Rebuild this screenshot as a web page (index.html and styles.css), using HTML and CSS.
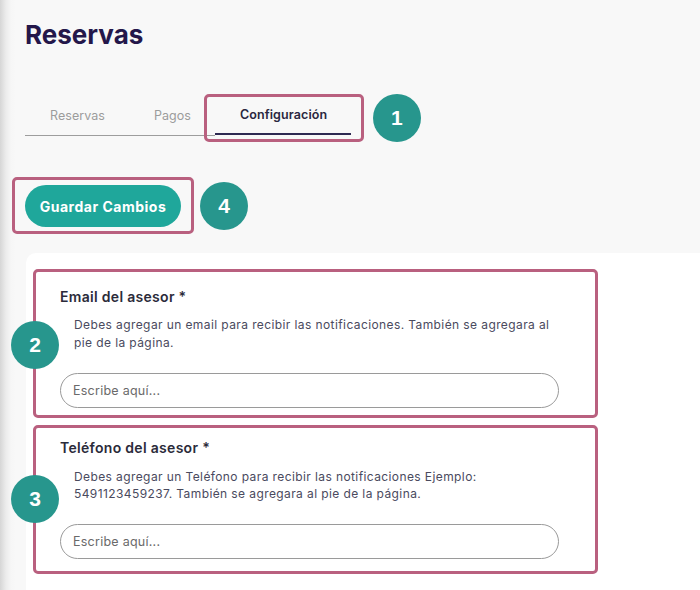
FILE: index.html
```html
<!DOCTYPE html>
<html lang="es">
<head>
<meta charset="utf-8">
<title>Reservas</title>
<link rel="stylesheet" href="styles.css">
</head>
<body>
<div class="page">
  <h1 class="title">Reservas</h1>
  <nav class="tabs">
    <div class="tab">Reservas</div>
    <div class="tab">Pagos</div>
    <div class="tab tab-active">Configuración<span class="mark mark-tab"></span><span class="badge badge-tab">1</span></div>
  </nav>
  <div class="actions">
    <button class="save" type="button">Guardar Cambios<span class="mark mark-save"></span><span class="badge badge-save">4</span></button>
  </div>
  <section class="panel">
    <div class="field field-email">
      <label class="field-label">Email del asesor *</label>
      <p class="field-help">Debes agregar un email para recibir las notificaciones. También se agregara al<br>pie de la página.</p>
      <input class="field-input" type="text" placeholder="Escribe aquí...">
      <span class="badge badge-field">2</span>
    </div>
    <div class="field field-phone">
      <label class="field-label">Teléfono del asesor *</label>
      <p class="field-help">Debes agregar un Teléfono para recibir las notificaciones Ejemplo:<br>5491123459237. También se agregara al pie de la página.</p>
      <input class="field-input" type="text" placeholder="Escribe aquí...">
      <span class="badge badge-field">3</span>
    </div>
  </section>
</div>
</body>
</html>
```
FILE: styles.css
```css
* { box-sizing: border-box; }
html, body { margin: 0; height: 100%; }
body {
  background: linear-gradient(to right, #d6d6d6 0, #ececec 6px, #f6f6f6 11px, #f8f8f8 16px);
  font-family: Inter, "Noto Sans", sans-serif;
  color: #2b2b3a;
  overflow: hidden;
}
.page { padding-left: 25px; }
.title {
  margin: 0;
  padding-top: 20px;
  font-size: 26px;
  line-height: 30px;
  font-weight: 700;
  color: #24174a;
}
.tabs {
  display: flex;
  margin-top: 47px;
}
.tab {
  position: relative;
  display: flex;
  align-items: center;
  height: 39px;
  padding: 0 24px 2px 25px;
  font-size: 12.5px;
  letter-spacing: 0.05px;
  color: #9c9c9c;
  border-bottom: 1px solid #9d9d9d;
}
.tab-active {
  color: #2a2740;
  font-weight: 600;
  letter-spacing: 0.1px;
  border-bottom: 2px solid #2e2a52;
  height: 38px;
}
.mark {
  position: absolute;
  border: 3px solid #b9607f;
  border-radius: 5px;
  pointer-events: none;
}
.mark-tab { top: -3px; left: -11px; right: -13px; bottom: -9px; }
.badge {
  position: absolute;
  width: 48px;
  height: 48px;
  border-radius: 50%;
  background: #27968d;
  color: #fff;
  font-weight: 700;
  font-size: 21px;
  letter-spacing: 0;
  display: flex;
  align-items: center;
  justify-content: center;
  font-family: "Liberation Sans", Arial, sans-serif;
}
.badge-tab { left: 158px; top: -3px; }
.actions { margin-top: 49px; display: flex; }
.save {
  position: relative;
  height: 42px;
  width: 156px;
  padding: 0;
  border: 0;
  border-radius: 21px;
  background: #1fa79b;
  color: #fff;
  font-family: inherit;
  font-size: 14px;
  letter-spacing: 0.5px;
  font-weight: 700;
}
.mark-save { top: -8px; left: -13px; right: -13px; bottom: -7px; }
.badge-save { left: 175px; top: -3px; }
.panel {
  margin-top: 26px;
  margin-left: 1px;
  background: #fff;
  border-top-left-radius: 10px;
  padding: 16px 0 40px 7px;
  min-height: 400px;
}
.field {
  position: relative;
  width: 565px;
  border: 3px solid #b9607f;
  border-radius: 5px;
  padding-left: 24px;
}
.field-email { padding-top: 15px; padding-bottom: 7px; }
.field-phone { margin-top: 7px; padding-top: 10px; padding-bottom: 12px; }
.field-label {
  display: block;
  font-size: 14px;
  letter-spacing: 0.3px;
  line-height: 20px;
  font-weight: 600;
  color: #2b2b3a;
}
.field-help {
  margin: 9px 0 0 14px;
  font-size: 12px;
  letter-spacing: 0.4px;
  line-height: 18px;
  color: #4a4a5e;
}
.field-phone .field-help { margin-top: 10px; line-height: 17px; }
.field-input {
  display: block;
  margin-top: 21px;
  width: 499px;
  height: 35px;
  border: 1px solid #9a9a9a;
  border-radius: 18px;
  padding: 0 12px;
  font-family: inherit;
  font-size: 12.5px;
  letter-spacing: 0.25px;
  color: #333;
  background: #fff;
}
.field-phone .field-input { margin-top: 22px; }
.field-input::placeholder { color: #6a6a6a; }
.badge-field { left: -25px; top: 49px; }
.field-phone .badge-field { top: 47px; }
```
